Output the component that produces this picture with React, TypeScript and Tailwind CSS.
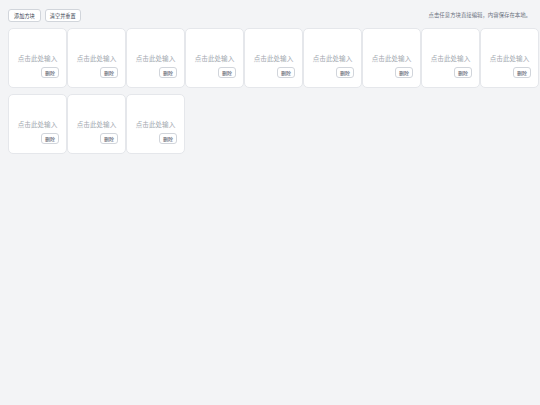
import { useState } from 'react'

const font = { fontFamily: '"Noto Sans CJK SC", "Noto Sans", sans-serif' }

function Block({ onRemove }: { onRemove: () => void }) {
  return (
    <div className="h-[60px] bg-white border border-[#e5e7eb] rounded-[5px] flex flex-col items-center justify-end pb-[9px] px-[7px]">
      <div
        className="whitespace-nowrap text-[6.6px] leading-[12px] text-[#a3a8b0]"
        contentEditable
        suppressContentEditableWarning
      >
        点击此处输入
      </div>
      <button
        onClick={onRemove}
        className="self-end mt-[3px] h-[11px] px-[3px] text-[5px] leading-none text-[#374151] bg-white border border-[#d1d5db] rounded-[3px]"
      >
        删除
      </button>
    </div>
  )
}

export default function App() {
  const [blocks, setBlocks] = useState<number[]>(Array.from({ length: 12 }, (_, i) => i))
  return (
    <div className="min-h-[405px] w-full bg-[#f3f4f6] px-[8px] pt-[9px]" style={font}>
      <div className="flex items-center justify-between h-[13px]">
        <div className="flex items-center gap-[4px]">
          <button
            onClick={() => setBlocks([...blocks, Date.now()])}
            className="h-[13px] px-[5px] text-[5.2px] leading-none text-[#374151] bg-white border border-[#d1d5db] rounded-[3px]"
          >
            添加方块
          </button>
          <button
            onClick={() => setBlocks(Array.from({ length: 12 }, (_, i) => i))}
            className="h-[13px] px-[4px] text-[5.2px] leading-none text-[#374151] bg-white border border-[#d1d5db] rounded-[3px]"
          >
            清空并重置
          </button>
        </div>
        <div className="text-[5.4px] text-[#6b7280] pr-[1px]">点击任意方块直接编辑，内容保存在本地。</div>
      </div>
      <div className="mt-[6px] grid grid-cols-[repeat(9,59px)] gap-y-[6px]">
        {blocks.map((b) => (
          <Block key={b} onRemove={() => setBlocks(blocks.filter((x) => x !== b))} />
        ))}
      </div>
    </div>
  )
}
